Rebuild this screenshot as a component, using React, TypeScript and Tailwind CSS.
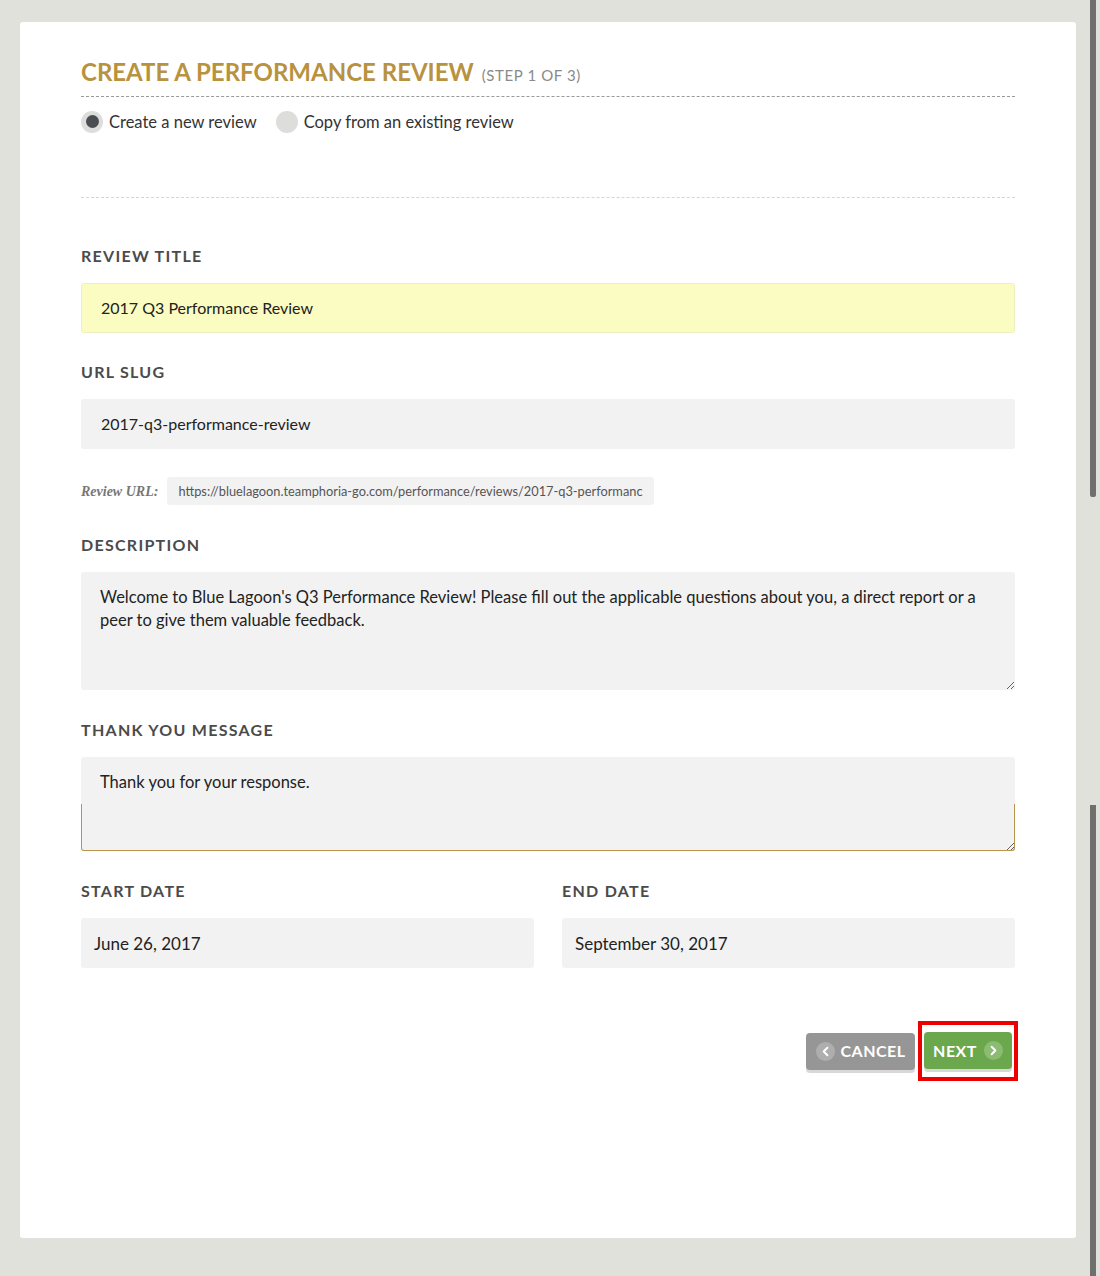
import { ChevronLeft, ChevronRight } from 'lucide-react'

const Label = ({ children }: { children: React.ReactNode }) => (
  <div className="text-[16px] font-bold tracking-[0.08em] text-[#4b4b4b] uppercase leading-none">{children}</div>
)

export default function App() {
  return (
    <div className="min-h-[1276px] bg-[#e1e1dc] flex font-['Lato',sans-serif]">
      <div className="flex-1 pl-5 pr-[13px] pt-[22px] pb-[38px]">
        <div className="bg-white rounded-[3px] h-[1216px] px-[61px] pt-[38px]">
          {/* header */}
          <div className="flex items-baseline gap-2 pb-[9px] border-b border-dashed border-[#9a9a9a]">
            <h1 className="text-[24px] font-bold text-[#b8923e] uppercase leading-none">Create a Performance Review</h1>
            <span className="text-[15px] tracking-[0.04em] text-[#8a8a8a]">(STEP 1 OF 3)</span>
          </div>
          <div className="flex items-center gap-[19px] pt-[13px] pb-[63px] border-b border-dashed border-[#d5d5d5]">
            <label className="flex items-center gap-[6px] text-[16.5px] text-[#333]">
              <span className="w-[22px] h-[22px] rounded-full bg-[#dddddb] flex items-center justify-center">
                <span className="w-[13px] h-[13px] rounded-full bg-[#4a4d52]" />
              </span>
              Create a new review
            </label>
            <label className="flex items-center gap-[6px] text-[16.5px] text-[#333]">
              <span className="w-[22px] h-[22px] rounded-full bg-[#dddddb]" />
              Copy from an existing review
            </label>
          </div>

          <div className="pt-[50px]">
            <Label>Review Title</Label>
            <div className="mt-[19px] h-[50px] rounded-[3px] bg-[#fafcc1] border border-[#eef0c0] flex items-center px-[19px] text-[16px] text-[#222]">
              2017 Q3 Performance Review
            </div>

            <div className="mt-[31px]"><Label>URL Slug</Label></div>
            <div className="mt-[19px] h-[50px] rounded-[3px] bg-[#f2f2f2] flex items-center px-[20px] text-[16px] text-[#222]">
              2017-q3-performance-review
            </div>

            <div className="mt-[28px] flex items-center gap-[9px]">
              <span className="font-['Liberation_Serif',serif] italic font-bold text-[14px] text-[#777]">Review URL:</span>
              <span className="h-[28px] rounded-[3px] bg-[#f2f2f2] flex items-center px-[11px] text-[12.8px] text-[#555]">
                https://bluelagoon.teamphoria-go.com/performance/reviews/2017-q3-performanc
              </span>
            </div>

            <div className="mt-[32px]"><Label>Description</Label></div>
            <textarea
              readOnly
              defaultValue="Welcome to Blue Lagoon's Q3 Performance Review! Please fill out the applicable questions about you, a direct report or a peer to give them valuable feedback."
              className="mt-[19px] block w-full h-[118px] rounded-[3px] bg-[#f2f2f2] px-[19px] py-[14px] text-[16.5px] leading-[23px] text-[#222] outline-none resize-y"
            />

            <div className="mt-[32px]"><Label>Thank You Message</Label></div>
            <div className="relative mt-[19px]">
              <textarea
                readOnly
                defaultValue="Thank you for your response."
                className="block w-full h-[94px] rounded-[3px] bg-[#f2f2f2] px-[19px] py-[14px] text-[16.5px] leading-[23px] text-[#222] outline-none resize-y"
              />
              <div className="pointer-events-none absolute inset-x-0 bottom-0 h-[47px] border border-t-0 border-[#b8954a] rounded-b-[3px]" />
            </div>

            <div className="mt-[32px] grid grid-cols-2 gap-[28px]">
              <div>
                <Label>Start Date</Label>
                <div className="mt-[19px] h-[50px] rounded-[3px] bg-[#f2f2f2] flex items-center px-[13px] text-[17px] text-[#222]">
                  June 26, 2017
                </div>
              </div>
              <div>
                <Label>End Date</Label>
                <div className="mt-[19px] h-[50px] rounded-[3px] bg-[#f2f2f2] flex items-center px-[13px] text-[17px] text-[#222]">
                  September 30, 2017
                </div>
              </div>
            </div>

            <div className="mt-[53px] flex justify-end items-center gap-[3px] -mr-[3px]">
              <button className="h-[37px] w-[109px] rounded-[4px] bg-[#969696] shadow-[0_3px_0_#d8d8d8] flex items-center justify-center gap-[6px] text-white font-bold text-[16px] tracking-[0.03em]">
                <span className="w-[19px] h-[19px] rounded-full bg-[#aeaeae] flex items-center justify-center">
                  <ChevronLeft size={15} strokeWidth={3.2} />
                </span>
                CANCEL
              </button>
              <div className="border-[4px] border-[#ee0000] px-[2px] pt-[7px] pb-[8px]">
                <button className="h-[37px] w-[88px] rounded-[4px] bg-[#6ba74c] shadow-[0_3px_0_#d8d8d8] flex items-center justify-center gap-[7px] text-white font-bold text-[16px] tracking-[0.03em]">
                  NEXT
                  <span className="w-[19px] h-[19px] rounded-full bg-[#8cbb72] flex items-center justify-center">
                    <ChevronRight size={15} strokeWidth={3.2} />
                  </span>
                </button>
              </div>
            </div>
          </div>
        </div>
      </div>
      {/* scrollbar */}
      <div className="w-[9px] mr-[2px] flex flex-col">
        <div className="h-[497px] w-[6px] ml-[1px] bg-[#6f6f6d] rounded-b-[2px]" />
        <div className="h-[308px]" />
        <div className="flex-1 w-[6px] ml-[1px] bg-[#6f6f6d]" />
      </div>
    </div>
  )
}
